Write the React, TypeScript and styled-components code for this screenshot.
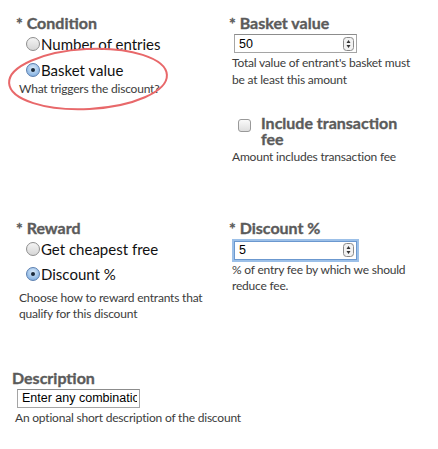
import React from 'react'
import styled, { createGlobalStyle, css } from 'styled-components'

const Global = createGlobalStyle`
body{margin:0;background:#fff;font-family:Lato,"Open Sans",sans-serif;}
`

const Page = styled.div`
position:relative;
width:438px;
height:449px;
padding:14px 0 0 16px;
box-sizing:border-box;
`

const Grid = styled.div`
display:grid;
grid-template-columns:213px 205px;
`

const Field = styled.div<{ $top?: number }>`
display:flex;
flex-direction:column;
align-items:flex-start;
margin-top:${p => p.$top || 0}px;
`

const Label = styled.div`
font-size:16px;
line-height:18px;
font-weight:700;
color:#5b5b5b;
-webkit-text-stroke:0.35px #5b5b5b;
`

const Options = styled.div<{ $gap?: number }>`
display:flex;
flex-direction:column;
gap:${p => p.$gap ?? 6}px;
margin:2px 0 0 10px;
`

const Option = styled.label`
display:flex;
align-items:center;
font-size:15px;
line-height:20px;
color:#111;
`

const Radio = styled.span<{ $on?: boolean }>`
width:12px;
height:12px;
border-radius:50%;
border:1px solid #8e8e8e;
margin-right:1px;
display:flex;
align-items:center;
justify-content:center;
background:linear-gradient(#f4f4f4,#d6d6d6);
${p => p.$on && css`
border-color:#5b7fb0;
background:radial-gradient(circle at 50% 35%,#dcecfb,#8fb8e4 70%,#6d9fd6);
&::after{content:'';width:4px;height:4px;border-radius:50%;background:#1b2a3a;}
`}
`

const Help = styled.div<{ $w?: number; $top?: number }>`
font-size:12px;
letter-spacing:-0.2px;
line-height:16.5px;
color:#3c3c3c;
margin:${p => p.$top ?? 2}px 0 0 3px;
width:${p => p.$w || 200}px;
`

const InputBox = styled.div<{ $focus?: boolean; $w?: number }>`
margin:2px 0 0 5px;
width:${p => p.$w || 123}px;
height:19px;
box-sizing:border-box;
border:1px solid #a5a5a5;
border-top-color:#8c8c8c;
display:flex;
align-items:center;
padding:0 2px 0 4px;
background:#fff;
${p => p.$focus && css`
margin:4px 0 0 5px;
border-color:#6b98cf;
box-shadow:0 0 0 2px #9cc0e8;
`}
`

const Value = styled.span`
flex:1;
white-space:nowrap;
overflow:hidden;
font-family:"Liberation Sans",Arial,sans-serif;
font-size:12.5px;
color:#000;
`

const CheckRow = styled.div`
display:flex;
align-items:flex-start;
margin:27px 0 0 9px;
`

const Check = styled.span`
width:11px;
height:11px;
border:1px solid #999;
border-radius:3px;
background:linear-gradient(#fafafa,#dedede);
margin:4px 10px 0 0;
flex:none;
`

const CheckLabel = styled(Label)`
line-height:16px;
width:145px;
`

const Desc = styled(Field)`
margin:46px 0 0 -4px;
`

const Circle = styled.svg`
position:absolute;
left:0;
top:38px;
pointer-events:none;
`

const Spinner = () => (
  <svg width="11" height="14" viewBox="0 0 11 14">
    <rect x="0.5" y="0.5" width="10" height="13" rx="3" fill="#f2f2f2" stroke="#8a8a8a" />
    <path d="M3.5 6 L5.5 3 L7.5 6 Z M3.5 8 L5.5 11 L7.5 8 Z" fill="#333" />
  </svg>
)

export default function App() {
  return (
    <Page>
      <Global />
      <Grid>
        <Field>
          <Label>* Condition</Label>
          <Options>
            <Option><Radio />Number of entries</Option>
            <Option><Radio $on />Basket value</Option>
          </Options>
          <Help $top={1}>What triggers the discount?</Help>
        </Field>
        <Field>
          <Label>* Basket value</Label>
          <InputBox><Value>50</Value><Spinner /></InputBox>
          <Help $w={185}>Total value of entrant's basket must be at least this amount</Help>
          <CheckRow>
            <Check />
            <CheckLabel>Include transaction fee</CheckLabel>
          </CheckRow>
          <Help>Amount includes transaction fee</Help>
        </Field>
        <Field $top={53}>
          <Label>* Reward</Label>
          <Options $gap={5}>
            <Option><Radio />Get cheapest free</Option>
            <Option><Radio $on />Discount %</Option>
          </Options>
          <Help $top={6}>Choose how to reward entrants that qualify for this discount</Help>
        </Field>
        <Field $top={53}>
          <Label>* Discount %</Label>
          <InputBox $focus><Value>5</Value><Spinner /></InputBox>
          <Help $w={195}>% of entry fee by which we should reduce fee.</Help>
        </Field>
      </Grid>
      <Desc>
        <Label>Description</Label>
        <InputBox><Value>Enter any combination</Value></InputBox>
        <Help $w={280}>An optional short description of the discount</Help>
      </Desc>
      <Circle width="180" height="80" viewBox="0 0 180 80">
        <ellipse cx="88" cy="41" rx="79" ry="30" fill="none" stroke="#e8686a" strokeWidth="2" transform="rotate(-3 88 41)" />
      </Circle>
    </Page>
  )
}
